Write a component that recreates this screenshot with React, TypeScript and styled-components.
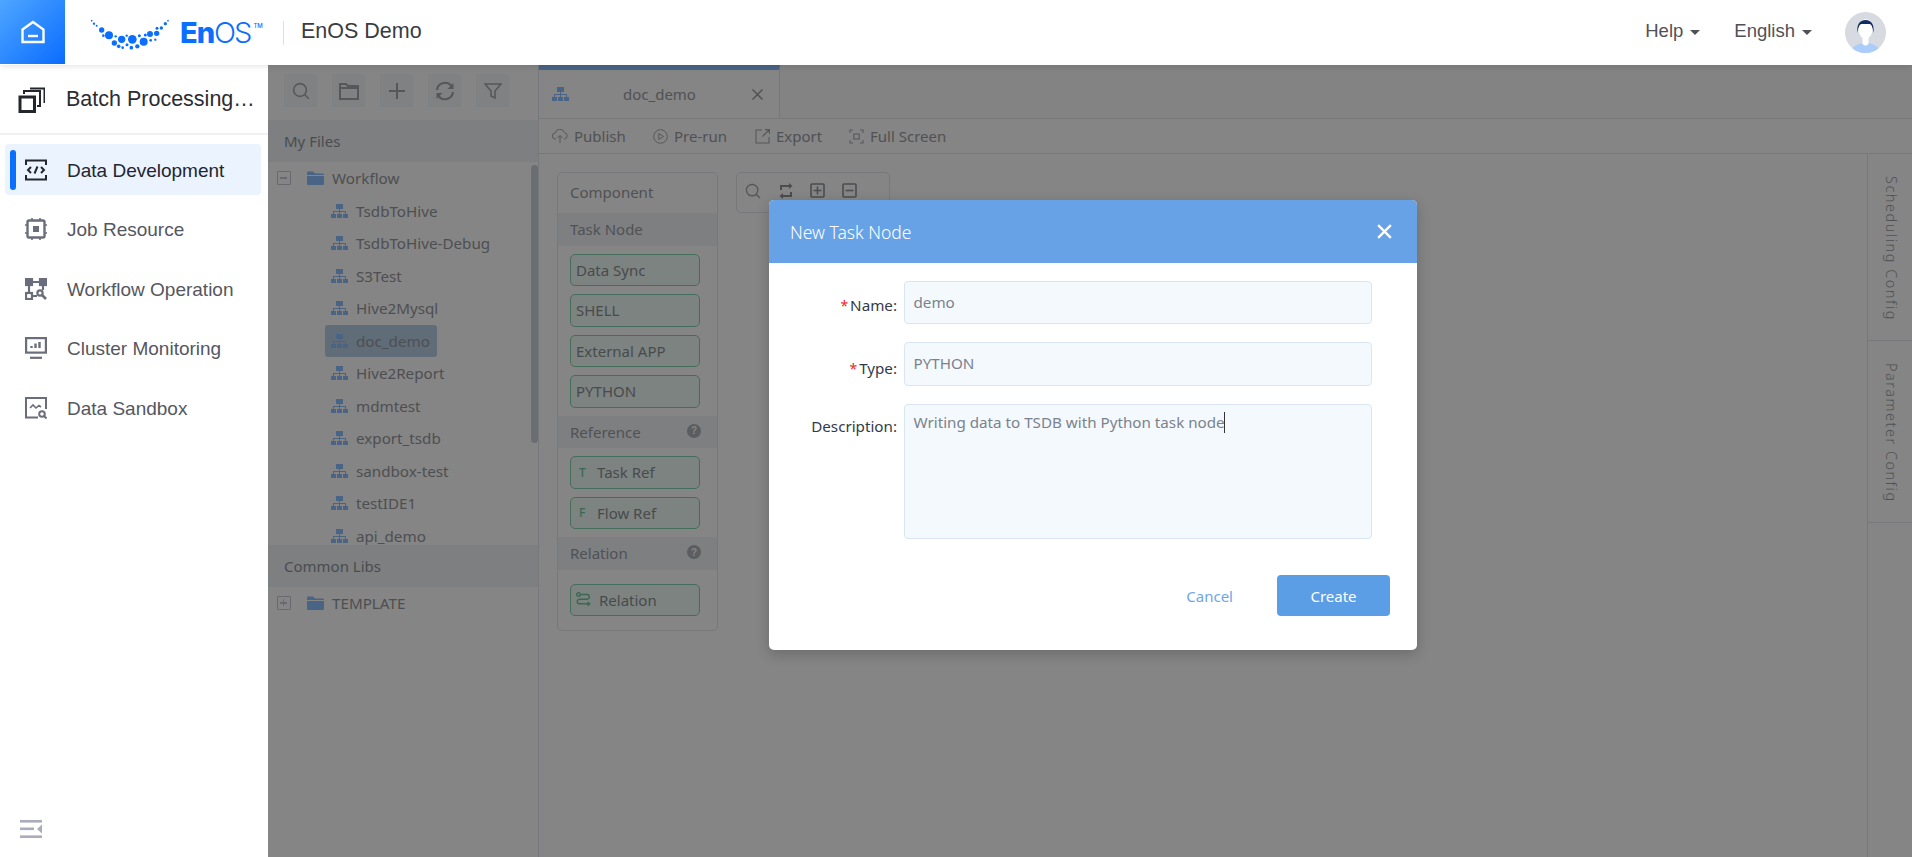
import React from "react";
import styled, { createGlobalStyle } from "styled-components";

const UI = `"Noto Sans", "Open Sans", sans-serif`;
const ARIAL = `"Liberation Sans", Arial, sans-serif`;

const Global = createGlobalStyle`
  html, body { margin: 0; padding: 0; height: 100%; background: #fff; }
  #root { height: 100%; }
  * { box-sizing: border-box; }
`;

const Page = styled.div`
  width: 1912px; height: 857px; display: flex; flex-direction: column; overflow: hidden;
  font-family: ${ARIAL}; position: relative;
`;
const TopBar = styled.header`
  height: 65px; flex: none; display: flex; align-items: center; background: #fff;
  box-shadow: 0 1px 6px rgba(0,0,0,.12); position: relative; z-index: 3;
`;
const HomeButton = styled.div`
  width: 65px; height: 64px; align-self: flex-start; display: flex; align-items: center; justify-content: center;
  background: linear-gradient(135deg, #4ea6ff 0%, #0a6cff 100%);
`;
const LogoMark = styled.div`
  margin-left: 15px; width: 100px; height: 60px; flex: none;
`;
const LogoWord = styled.div`
  display: flex; align-items: baseline; color: #0a6eff; font-family: Inter, sans-serif;
  font-size: 29px; line-height: 36px; letter-spacing: -1px; width: 103px;
`;
const LogoEn = styled.span` font-weight: 800; `;
const LogoOs = styled.span` font-weight: 300; letter-spacing: -2px; `;
const LogoTm = styled.span`
  font-size: 6px; font-weight: 500; letter-spacing: 0; align-self: flex-start; margin: 6px 0 0 3px; line-height: 10px;
`;
const Divider = styled.div` width: 1px; height: 24px; background: #dcdfe4; `;
const ProductName = styled.div` margin-left: 17px; font-size: 21.5px; color: #3a3c42; padding-bottom: 3px; `;
const TopRight = styled.div`
  margin-left: auto; display: flex; align-items: center; padding-right: 26px;
`;
const TopMenu = styled.div<{ $gap: number }>`
  display: flex; align-items: center; gap: 7px; font-size: 18.5px; color: #4f5157; margin-right: ${p => p.$gap}px; padding-bottom: 3px;
`;
const Caret = styled.span`
  width: 0; height: 0; border-left: 5px solid transparent; border-right: 5px solid transparent;
  border-top: 5px solid #4f5157; margin-top: 2px;
`;

const Body = styled.div` flex: 1; display: flex; min-height: 0; `;
const Sidebar = styled.aside`
  width: 268px; flex: none; display: flex; flex-direction: column; background: #fff; position: relative;
`;
const SideTitle = styled.div`
  height: 70px; flex: none; display: flex; align-items: center; padding: 0 0 0 18px; gap: 21px;
  border-bottom: 2px solid #f0f1f5; font-size: 21.5px; color: #2b2d33;
`;
const SideTitleText = styled.span`
  white-space: nowrap; line-height: 26px;
`;
const Nav = styled.nav`
  display: flex; flex-direction: column; gap: 8.5px; padding: 9px 7px 0 5px;
`;
const NavItem = styled.div<{ $active?: boolean }>`
  height: 51px; display: flex; align-items: center; gap: 20px; padding-left: 20px; border-radius: 4px;
  position: relative; font-size: 19px; color: ${p => (p.$active ? "#24262e" : "#55575f")};
  background: ${p => (p.$active ? "#ebf3fe" : "transparent")};
  ${p => p.$active && `&::before { content: ""; position: absolute; left: 5px; top: 6px; width: 6px; height: 40px; border-radius: 3px; background: #0a6eff; }`}
`;
const NavText = styled.span` padding-top: 2px; `;
const Collapse = styled.div` margin-top: auto; padding: 0 0 19px 20px; height: 37px; display: flex; `;

const Main = styled.main`
  flex: 1; min-width: 0; position: relative; display: flex; background: #fff; overflow: hidden;
  font-family: ${UI}; color: #9a9da2;
`;
const FilePanel = styled.section`
  width: 271px; flex: none; display: flex; flex-direction: column; border-right: 1px solid #e4e7ec; position: relative;
`;
const FileTools = styled.div` height: 55px; flex: none; display: flex; gap: 15px; padding: 9px 0 0 16px; `;
const ToolButton = styled.div`
  width: 33px; height: 33px; display: flex; align-items: center; justify-content: center; background: #f5f7fa; border-radius: 2px;
`;
const Band = styled.div<{ $h: number }>`
  height: ${p => p.$h}px; flex: none; display: flex; align-items: center; padding-left: 16px;
  background: #eff4f8; font-size: 15px; color: #8f9397;
`;
const Tree = styled.div` height: 383px; flex: none; overflow: hidden; `;
const Row = styled.div<{ $indent: number }>`
  height: 32.5px; display: flex; align-items: center; padding-left: ${p => p.$indent}px; font-size: 15.2px; white-space: nowrap; color: #95989c;
`;
const RowLabel = styled.span<{ $active?: boolean }>`
  display: flex; align-items: center; gap: 8px; height: 32px; padding: 0 6px; margin-left: -6px; border-radius: 3px;
  background: ${p => (p.$active ? "#b8cfe6" : "transparent")};
  min-width: ${p => (p.$active ? "112px" : "0")};
`;
const TreeToggle = styled.span`
  width: 14px; height: 14px; border: 1.5px solid #c8ccd2; flex: none; margin-right: 16px; position: relative; border-radius: 1px;
`;
const ToggleBar = styled.span<{ $v?: boolean }>`
  position: absolute; background: #c8ccd2;
  ${p => (p.$v ? "left: 4.75px; top: 2px; width: 1.5px; height: 7px;" : "left: 2px; top: 4.75px; width: 7px; height: 1.5px;")}
`;
const ScrollThumb = styled.div`
  position: absolute; right: 0; top: 100px; width: 7px; height: 278px; border-radius: 4px; background: #cbd2da;
`;

const Editor = styled.section` flex: 1; min-width: 0; display: flex; flex-direction: column; `;
const TabBar = styled.div` height: 54px; flex: none; display: flex; border-bottom: 1px solid #e4e7ec; background: #fbfcfd; `;
const Tab = styled.div`
  width: 241px; border-top: 5px solid #8fc0ff; border-right: 1px solid #e4e7ec; background: #fff;
  display: flex; align-items: center; padding-left: 13px; font-size: 15px; height: 53px;
`;
const TabName = styled.span` margin-left: 54px; width: 129px; `;
const EditTools = styled.div`
  height: 35px; flex: none; display: flex; align-items: center; border-bottom: 1px solid #e4e7ec; padding-left: 13px; font-size: 15px;
`;
const EditTool = styled.div<{ $w: number }>` width: ${p => p.$w}px; display: flex; align-items: center; gap: 6px; flex: none; `;
const Workspace = styled.div` flex: 1; display: flex; min-height: 0; `;
const Canvas = styled.div` flex: 1; display: flex; gap: 18px; padding: 18px 0 0 18px; align-items: flex-start; `;
const Palette = styled.div`
  width: 161px; border: 1px solid #e2e6ec; border-radius: 5px; padding-bottom: 14px; display: flex; flex-direction: column; overflow: hidden;
`;
const PaletteTitle = styled.div` height: 40px; display: flex; align-items: center; padding: 0 0 2px 12px; font-size: 15px; `;
const PaletteBand = styled.div`
  height: 32.5px; display: flex; align-items: center; justify-content: space-between; padding: 0 16px 0 12px; background: #eff4f8; font-size: 15px;
`;
const HelpDot = styled.span`
  width: 14px; height: 14px; border-radius: 50%; background: #aeb2b8; color: #fff; display: flex; align-items: center; justify-content: center;
  font-size: 10px; font-weight: 700; font-family: "Liberation Sans", sans-serif; margin-top: -2px;
`;
const Nodes = styled.div<{ $top?: number; $bottom?: number }>`
  display: flex; flex-direction: column; gap: 8px; padding: ${p => p.$top ?? 8}px 0 ${p => p.$bottom ?? 8}px 12px;
`;
const Node = styled.div`
  width: 130px; height: 32.5px; border: 1px solid #84d2b0; border-radius: 5px; background: #f0fbf5; display: flex; align-items: center;
  padding-left: 5px; font-size: 15px; color: #8b9094; white-space: nowrap;
`;
const NodeMark = styled.span`
  width: 21px; flex: none; padding-left: 3px; color: #6fc8a4; font-size: 12px; font-weight: 500;
`;
const NodeGlyph = styled.span` width: 23px; flex: none; display: flex; align-items: center; `;
const CanvasTools = styled.div`
  width: 154px; height: 41px; border: 1px solid #e2e6ec; border-radius: 5px; display: flex; align-items: center; gap: 16.5px; padding: 0 0 4px 8px;
`;
const Rail = styled.div` width: 45px; flex: none; border-left: 1px solid #e4e7ec; display: flex; flex-direction: column; `;
const RailTab = styled.div<{ $h: number }>`
  height: ${p => p.$h}px; border-bottom: 1px solid #e4e7ec; writing-mode: vertical-rl; display: flex; align-items: center; padding: 22px 0 0 4px;
  font-size: 14.5px; letter-spacing: 1.5px; font-family: ${UI}; font-weight: 300;
`;

const Overlay = styled.div` position: absolute; inset: 0; background: rgba(0,0,0,.48); z-index: 2; `;
const Modal = styled.div`
  position: absolute; left: 501px; top: 135px; width: 648px; height: 450px; background: #fff; border-radius: 5px; overflow: hidden;
  box-shadow: 0 4px 14px rgba(0,0,0,.2); display: flex; flex-direction: column; color: #333a48;
`;
const ModalHead = styled.div`
  height: 63px; flex: none; background: #68a2e6; color: #fff; display: flex; align-items: center; justify-content: space-between; padding: 0 25px 0 21px;
  font-size: 17.5px; font-weight: 300;
`;
const Form = styled.div`
  display: grid; grid-template-columns: 128px 468px; column-gap: 6.5px; row-gap: 18px; padding-top: 18px;
`;
const FieldLabel = styled.div<{ $pt: number }>`
  text-align: right; font-size: 15.2px; line-height: 20px; padding-top: ${p => p.$pt}px; white-space: nowrap;
`;
const Star = styled.span` color: #f5222d; margin-right: 2px; font-size: 14px; `;
const Field = styled.div<{ $h: number; $pt: number }>`
  height: ${p => p.$h}px; background: #f4f9fe; border: 1.5px solid #d9e5f3; border-radius: 4px; padding: ${p => p.$pt}px 9px 0; font-size: 15.2px; line-height: 24px; color: #7b828c;
  white-space: nowrap;
`;
const TextCaret = styled.span`
  display: inline-block; width: 1px; height: 21px; background: #333; margin-left: -1px; vertical-align: -5px;
`;
const ModalFoot = styled.div`
  margin-top: 36px; display: flex; justify-content: flex-end; align-items: center; padding-right: 27px; gap: 44px; font-size: 15px;
`;
const CancelBtn = styled.span` color: #6ea6e8; `;
const CreateBtn = styled.div`
  width: 113px; height: 41px; background: #5c9ee6; color: #fff; border-radius: 4px; display: flex; align-items: center; justify-content: center;
`;

const DOTS: [number, number, number][] = [
  [35,53,2.5],[42,62,3.5],[50,68,3],[65,81,8],[70,98,4],[87,97,12],[107,100,3.5],[103,120,8],[125,109,11],[116,130,5.5],[128,134,4],[140,98,3.5],[141,125,4.5],
  [157,109,13],[154,134,5.5],[172,130,6.5],[178,98,4.5],[191,116,12],[196,96,4.5],[210,93,9],[212,112,4],[226,110,3.5],[230,91,8],[231,76,4.5],[244,75,5],[256,62,5],[264,53,2.5],
];

const Logo = () => (
  <svg width="100" height="60" viewBox="0 0 300 180">
    {DOTS.map(([x, y, r], i) => <circle key={i} cx={x} cy={y} r={r} fill="#0a6eff" />)}
  </svg>
);
const HomeIcon = () => (
  <svg width="24" height="24" viewBox="0 0 24 24" fill="none" stroke="#fff" strokeWidth="2.4">
    <path d="M1.5 9.500 12 2l10.500 7.500V22h-21z" /><path d="M7 16h10" />
  </svg>
);
const StackIcon = () => (
  <svg width="27" height="27" viewBox="0 0 27 27" fill="none" stroke="#24262e" strokeWidth="2.6">
    <rect x="2" y="11" width="14.5" height="14.5" strokeWidth="3" /><path d="M6 8V5h16v15h-3" strokeWidth="2" /><path d="M12 2.500h14.500V17" strokeWidth="2" />
  </svg>
);
const CodeIcon = () => (
  <svg width="22" height="22" viewBox="0 0 22 22" fill="none" stroke="#24262e" strokeWidth="2">
    <path d="M1 6V1.500h20V6M1 16v4.500h20V16" /><path d="M6 8 3 11l3 3M16 8l3 3-3 3M12.500 7.500l-3 7" />
  </svg>
);
const ChipIcon = () => (
  <svg width="22" height="22" viewBox="0 0 22 22" fill="none" stroke="#6a6d7c" strokeWidth="2.4">
    <rect x="2.500" y="2.500" width="17" height="17" rx="1.500" /><rect x="8" y="8" width="6" height="6" fill="#6a6d7c" stroke="none" />
    <path d="M0 7h2M0 15h2M20 7h2M20 15h2M7 0v2M15 0v2M7 20v2M15 20v2" strokeWidth="1.6" />
  </svg>
);
const FlowIcon = () => (
  <svg width="22" height="22" viewBox="0 0 22 22" fill="none" stroke="#6a6d7c" strokeWidth="2.2">
    <rect x="1" y="1" width="6" height="6" fill="#6a6d7c" /><rect x="15" y="1" width="6" height="6" fill="#6a6d7c" /><rect x="1" y="15" width="6" height="6" />
    <path d="M7 4h8M4 7v8M18 7v5M7 18h5" /><circle cx="15" cy="15" r="2.6" /><path d="m17 17 4 4" strokeWidth="2.6" />
  </svg>
);
const MonitorIcon = () => (
  <svg width="22" height="22" viewBox="0 0 22 22" fill="none" stroke="#6a6d7c" strokeWidth="2.2">
    <rect x="1.100" y="1.100" width="19.800" height="14.500" /><path d="M5 20.800h12" /><path d="M6.500 11V9M10.500 11V6.500M14.500 11V5" strokeWidth="2.4" />
  </svg>
);
const SandboxIcon = () => (
  <svg width="22" height="22" viewBox="0 0 22 22" fill="none" stroke="#6a6d7c" strokeWidth="2">
    <path d="M13 20.500H1V1h20v11" /><path d="m5 11 3-3 3 3 3-2.500 2 1.500" strokeWidth="1.6" /><circle cx="17" cy="17" r="2.800" /><path d="m19 19 2.500 2.500" />
  </svg>
);
const CollapseIcon = () => (
  <svg width="22" height="18" viewBox="0 0 22 18" fill="#aaacbb">
    <rect width="22" height="2.6" /><rect y="7.500" width="14" height="2.6" /><rect y="15.400" width="22" height="2.6" /><path d="M22 4.500v9l-5-4.500z" />
  </svg>
);
const Avatar = () => (
  <svg width="41" height="41" viewBox="0 0 41 41">
    <defs><clipPath id="av"><circle cx="20.500" cy="20.500" r="20.500" /></clipPath></defs>
    <g clipPath="url(#av)">
      <rect width="41" height="41" fill="#d8dae2" />
      <ellipse cx="20.500" cy="41" rx="15" ry="10" fill="#aacdfb" />
      <path d="M17.500 24h6v8q-3 3-6 0z" fill="#fff" />
      <ellipse cx="20.500" cy="17" rx="7" ry="10" fill="#fff" />
      <path d="M12.500 21c-1-8 2-13 8-13s9 5 8 13c-.5-5-2-9-4-9h-8c-2 0-3.500 4-4 9z" fill="#122c63" />
    </g>
  </svg>
);
const i = "#a4a8ae";
const SearchIcon = ({ s = 18 }: { s?: number }) => (
  <svg width={s} height={s} viewBox="0 0 18 18" fill="none" stroke={i} strokeWidth="1.6"><circle cx="8" cy="8" r="6.400" /><path d="m12.800 12.800 4 4" /></svg>
);
const FolderOutline = () => (
  <svg width="20" height="18" viewBox="0 0 20 18" fill="none" stroke={i} strokeWidth="2"><path d="M1 2h6l2 2h10v13H1zM1 6h18" /></svg>
);
const PlusIcon = () => (
  <svg width="16" height="16" viewBox="0 0 16 16" stroke={i} strokeWidth="2"><path d="M8 0v16M0 8h16" /></svg>
);
const RefreshIcon = () => (
  <svg width="20" height="20" viewBox="0 0 20 20" fill="none" stroke={i} strokeWidth="2.2"><path d="M2 9a8 8 0 0 1 15-3M18 11A8 8 0 0 1 3 14" /><path d="M18.500 2v6h-6zM1.500 18v-6h6z" fill={i} stroke="none" /></svg>
);
const FilterIcon = () => (
  <svg width="18" height="18" viewBox="0 0 18 18" fill="none" stroke={i} strokeWidth="1.6"><path d="M1 2h16l-6 7v7l-4-2V9z" /></svg>
);
const FolderFill = () => (
  <svg width="17" height="14" viewBox="0 0 17 14" fill="#8fc0ff"><path d="M0 1.500A1 1 0 0 1 1 .5h5l2 2h8a1 1 0 0 1 1 1V4H0zM0 5h17v8a1 1 0 0 1-1 1H1a1 1 0 0 1-1-1z" /></svg>
);
const OrgIcon = () => (
  <svg width="17" height="14" viewBox="0 0 17 14" fill="#8fc0ff">
    <rect x="5" y="0" width="7" height="5" /><rect x="8" y="5" width="1" height="2" /><rect x="2" y="7" width="13" height="1" />
    <rect x="2" y="7" width="1" height="3" /><rect x="8" y="7" width="1" height="3" /><rect x="14" y="7" width="1" height="3" />
    <rect x="0" y="10" width="5" height="4" /><rect x="6" y="10" width="5" height="4" /><rect x="12" y="10" width="5" height="4" />
  </svg>
);
const CloseSmall = () => (
  <svg width="11" height="11" viewBox="0 0 11 11" stroke="#9a9da2" strokeWidth="1.500"><path d="m.5.5 10 10M10.500.5l-10 10" /></svg>
);
const CloudIcon = () => (
  <svg width="16" height="15" viewBox="0 0 16 15" fill="none" stroke={i} strokeWidth="1"><path d="M4 10H3.500a3 3 0 0 1-.3-6 4.800 4.800 0 0 1 9.300-.3 3.200 3.200 0 0 1 0 6.300H12" /><path d="M8 14V7M5.500 9 8 6.500 10.500 9" /></svg>
);
const PlayIcon = () => (
  <svg width="15" height="15" viewBox="0 0 15 15" fill="none" stroke={i} strokeWidth="1"><circle cx="7.500" cy="7.500" r="6.800" /><path d="M5.800 4.500v6l4.700-3z" /></svg>
);
const ExportIcon = () => (
  <svg width="15" height="15" viewBox="0 0 15 15" fill="none" stroke={i} strokeWidth="1.100"><path d="M7 1H1v13h13V8M7.500 7.500 14 1M10 .6h4.400V5" /></svg>
);
const ScreenIcon = () => (
  <svg width="15" height="15" viewBox="0 0 15 15" fill="none" stroke={i} strokeWidth="1.100"><path d="M1 4V1h3M11 1h3v3M1 11v3h3M11 14h3v-3" /><rect x="4.800" y="5" width="5.400" height="5" /></svg>
);
const d = "#8f9298";
const SwapIcon = () => (
  <svg width="16" height="16" viewBox="0 0 16 16" fill="none" stroke={d} strokeWidth="2"><path d="M3 7V3h10M13 9v4H3" /><path d="M11 0v6l3.500-3zM5 10v6l-3.500-3z" fill={d} stroke="none" /></svg>
);
const BoxPlus = () => (
  <svg width="15" height="15" viewBox="0 0 15 15" fill="none" stroke={d} strokeWidth="1.600"><rect x="1" y="1" width="13" height="13" rx="1" /><path d="M7.500 3.500v8M3.500 7.500h8" /></svg>
);
const BoxMinus = () => (
  <svg width="15" height="15" viewBox="0 0 15 15" fill="none" stroke={d} strokeWidth="1.600"><rect x="1" y="1" width="13" height="13" rx="1" /><path d="M3.500 7.500h8" /></svg>
);
const RelationIcon = () => (
  <svg width="15" height="15" viewBox="0 0 15 15" fill="none" stroke="#6fc8a4" strokeWidth="1.400"><circle cx="2.500" cy="2.500" r="1.800" /><path d="M4.500 2.500H11a2.200 2.200 0 0 1 0 4.700H3.500a2.200 2.200 0 0 0 0 4.600H13" /><path d="m11.500 10 2.200 1.800-2.200 1.800" /></svg>
);
const CloseBig = () => (
  <svg width="15" height="15" viewBox="0 0 13 13" stroke="#fff" strokeWidth="2"><path d="m1 1 11 11M12 1 1 12" /></svg>
);

const NAV: [string, React.ReactNode][] = [
  ["Data Development", <CodeIcon />], ["Job Resource", <ChipIcon />], ["Workflow Operation", <FlowIcon />],
  ["Cluster Monitoring", <MonitorIcon />], ["Data Sandbox", <SandboxIcon />],
];
const FILES = ["TsdbToHive", "TsdbToHive-Debug", "S3Test", "Hive2Mysql", "doc_demo", "Hive2Report", "mdmtest", "export_tsdb", "sandbox-test", "testIDE1", "api_demo"];

export default function App() {
  return (
    <Page>
      <Global />
      <TopBar>
        <HomeButton><HomeIcon /></HomeButton>
        <LogoMark><Logo /></LogoMark>
        <LogoWord><LogoEn>En</LogoEn><LogoOs>OS</LogoOs><LogoTm>TM</LogoTm></LogoWord>
        <Divider />
        <ProductName>EnOS Demo</ProductName>
        <TopRight>
          <TopMenu $gap={34}>Help<Caret /></TopMenu>
          <TopMenu $gap={33}>English<Caret /></TopMenu>
          <Avatar />
        </TopRight>
      </TopBar>
      <Body>
        <Sidebar>
          <SideTitle><StackIcon /><SideTitleText>Batch Processing…</SideTitleText></SideTitle>
          <Nav>
            {NAV.map(([label, icon], n) => (
              <NavItem key={label} $active={n === 0}>{icon}<NavText>{label}</NavText></NavItem>
            ))}
          </Nav>
          <Collapse><CollapseIcon /></Collapse>
        </Sidebar>
        <Main>
          <FilePanel>
            <FileTools>
              <ToolButton><SearchIcon /></ToolButton>
              <ToolButton><FolderOutline /></ToolButton>
              <ToolButton><PlusIcon /></ToolButton>
              <ToolButton><RefreshIcon /></ToolButton>
              <ToolButton><FilterIcon /></ToolButton>
            </FileTools>
            <Band $h={42}>My Files</Band>
            <Tree>
              <Row $indent={9}>
                <TreeToggle><ToggleBar /></TreeToggle>
                <RowLabel><FolderFill />Workflow</RowLabel>
              </Row>
              {FILES.map(f => (
                <Row key={f} $indent={63}>
                  <RowLabel $active={f === "doc_demo"}><OrgIcon />{f}</RowLabel>
                </Row>
              ))}
            </Tree>
            <Band $h={42}>Common Libs</Band>
            <Row $indent={9}>
              <TreeToggle><ToggleBar /><ToggleBar $v /></TreeToggle>
              <RowLabel><FolderFill />TEMPLATE</RowLabel>
            </Row>
            <ScrollThumb />
          </FilePanel>
          <Editor>
            <TabBar>
              <Tab><OrgIcon /><TabName>doc_demo</TabName><CloseSmall /></Tab>
            </TabBar>
            <EditTools>
              <EditTool $w={101}><CloudIcon />Publish</EditTool>
              <EditTool $w={102}><PlayIcon />Pre-run</EditTool>
              <EditTool $w={94}><ExportIcon />Export</EditTool>
              <EditTool $w={130}><ScreenIcon />Full Screen</EditTool>
            </EditTools>
            <Workspace>
              <Canvas>
                <Palette>
                  <PaletteTitle>Component</PaletteTitle>
                  <PaletteBand>Task Node</PaletteBand>
                  <Nodes>
                    <Node>Data Sync</Node>
                    <Node>SHELL</Node>
                    <Node>External APP</Node>
                    <Node>PYTHON</Node>
                  </Nodes>
                  <PaletteBand>Reference<HelpDot>?</HelpDot></PaletteBand>
                  <Nodes>
                    <Node><NodeMark>T</NodeMark>Task Ref</Node>
                    <Node><NodeMark>F</NodeMark>Flow Ref</Node>
                  </Nodes>
                  <PaletteBand>Relation<HelpDot>?</HelpDot></PaletteBand>
                  <Nodes $top={14} $bottom={0}>
                    <Node><NodeGlyph><RelationIcon /></NodeGlyph>Relation</Node>
                  </Nodes>
                </Palette>
                <CanvasTools>
                  <SearchIcon s={16} /><SwapIcon /><BoxPlus /><BoxMinus />
                </CanvasTools>
              </Canvas>
              <Rail>
                <RailTab $h={187}>Scheduling Config</RailTab>
                <RailTab $h={182}>Parameter Config</RailTab>
              </Rail>
            </Workspace>
          </Editor>
          <Overlay>
            <Modal>
              <ModalHead>New Task Node<CloseBig /></ModalHead>
              <Form>
                <FieldLabel $pt={14}><Star>*</Star>Name:</FieldLabel>
                <Field $h={43} $pt={8}>demo</Field>
                <FieldLabel $pt={16}><Star>*</Star>Type:</FieldLabel>
                <Field $h={44} $pt={8}>PYTHON</Field>
                <FieldLabel $pt={12}>Description:</FieldLabel>
                <Field $h={135} $pt={5}>Writing data to TSDB with Python task node<TextCaret /></Field>
              </Form>
              <ModalFoot>
                <CancelBtn>Cancel</CancelBtn>
                <CreateBtn>Create</CreateBtn>
              </ModalFoot>
            </Modal>
          </Overlay>
        </Main>
      </Body>
    </Page>
  );
}
